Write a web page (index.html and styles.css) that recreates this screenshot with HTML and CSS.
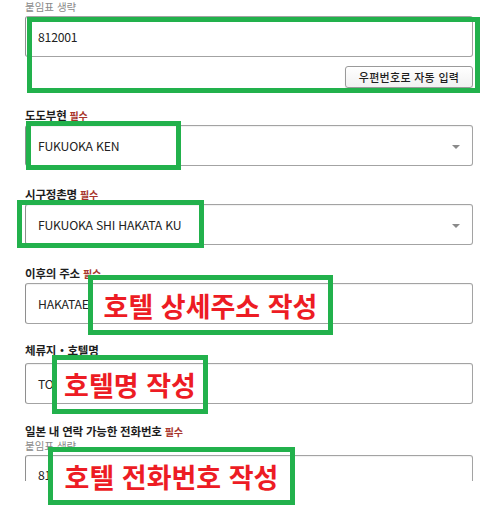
FILE: index.html
```html
<!DOCTYPE html>
<html lang="ko">
<head>
<meta charset="utf-8">
<link rel="stylesheet" href="styles.css">
</head>
<body>
<div class="page">
  <div class="form">
    <div class="sub sub-top">붙임표 생략</div>
    <div class="field-box">812001</div>
    <div class="btn-row"><button class="btn">우편번호로 자동 입력</button></div>

    <div class="label l1">도도부현 <span class="req">필수</span></div>
    <div class="field-box select">FUKUOKA KEN<span class="arrow"></span></div>

    <div class="label l2">시구정촌명 <span class="req">필수</span></div>
    <div class="field-box select">FUKUOKA SHI HAKATA KU<span class="arrow"></span></div>

    <div class="label l3">이후의 주소 <span class="req">필수</span></div>
    <div class="field-box">HAKATAE</div>

    <div class="label l4">체류지・호텔명</div>
    <div class="field-box f4">TO</div>

    <div class="label l5">일본 내 연락 가능한 전화번호 <span class="req">필수</span></div>
    <div class="sub">붙임표 생략</div>
    <div class="field-box last">81</div>
  </div>

  <div class="mark m1"></div>
  <div class="mark m2"></div>
  <div class="mark m3"></div>
  <div class="mark m4"><span class="note">호텔 상세주소 작성</span></div>
  <div class="mark m5"><span class="note">호텔명 작성</span></div>
  <div class="mark m6"><span class="note">호텔 전화번호 작성</span></div>
</div>
</body>
</html>
```
FILE: styles.css
```css
* { box-sizing: border-box; }
html, body { margin: 0; padding: 0; background: #fff; }
body { font-family: "Noto Sans CJK KR", "Noto Sans", sans-serif; color: #222; }

.page { position: relative; width: 482px; height: 520px; overflow: hidden; }

.form {
  width: 473px;
  height: 481px;
  overflow: hidden;
  padding-left: 25px;
  display: flex;
  flex-direction: column;
}

.sub { font-size: 10.5px; line-height: 14px; color: #8a8a8a; height: 14px; }
.sub-top { margin-top: 0; }

.label { font-size: 11.5px; font-weight: 700; line-height: 16px; height: 16px; color: #1e1e1e; letter-spacing: -0.2px; }
.req { font-size: 10px; color: #a8352c; font-weight: 700; }
.l1 { margin-top: 19px; }
.l2 { margin-top: 20px; }
.l3 { margin-top: 20px; }
.l4 { margin-top: 18px; }
.l5 { margin-top: 19px; }

.field-box {
  position: relative;
  margin-top: 2px;
  height: 41px;
  width: 448px;
  flex: none;
  border: 1px solid #a3a3a3;
  border-left-color: #8f8f8f;
  border-radius: 3px;
  box-shadow: inset 0 1px 1px rgba(0,0,0,0.06);
  padding-left: 12px;
  display: flex;
  align-items: center;
  font-size: 12.2px;
  letter-spacing: -0.2px;
  color: #222;
  background: #fff;
}
.f4 { margin-top: 5px; }
.last { align-items: flex-start; padding-top: 11px; line-height: 16px; }

.arrow {
  position: absolute;
  right: 12px;
  top: 19px;
  width: 0; height: 0;
  border-left: 4px solid transparent;
  border-right: 4px solid transparent;
  border-top: 4px solid #8a8a8a;
}

.btn-row { display: flex; justify-content: flex-end; margin-top: 9px; width: 448px; }
.btn {
  height: 22px;
  width: 128px;
  padding: 0;
  font-family: inherit;
  font-size: 11px;
  font-weight: 500;
  color: #1e1e1e;
  background: linear-gradient(#fff, #f1f1f1);
  border: 1px solid #9a9a9a;
  border-radius: 3px;
  box-shadow: 0 1px 1px rgba(0,0,0,0.15);
  letter-spacing: 0.3px;
}

.mark {
  position: absolute;
  border: 5px solid #22b14c;
  display: flex;
  align-items: center;
  justify-content: center;
}
.m1 { left: 27px; top: 17px; width: 453px; height: 76px; }
.m2 { left: 26px; top: 121px; width: 155px; height: 49px; }
.m3 { left: 17px; top: 200px; width: 187px; height: 48px; }
.m4 { left: 88px; top: 275px; width: 245px; height: 60px; }
.m5 { left: 52px; top: 355px; width: 156px; height: 59px; }
.m6 { left: 48px; top: 447px; width: 247px; height: 58px; }

.note {
  font-size: 27px;
  font-weight: 700;
  color: #ed1c24;
  line-height: 1;
  white-space: nowrap;
}
```
